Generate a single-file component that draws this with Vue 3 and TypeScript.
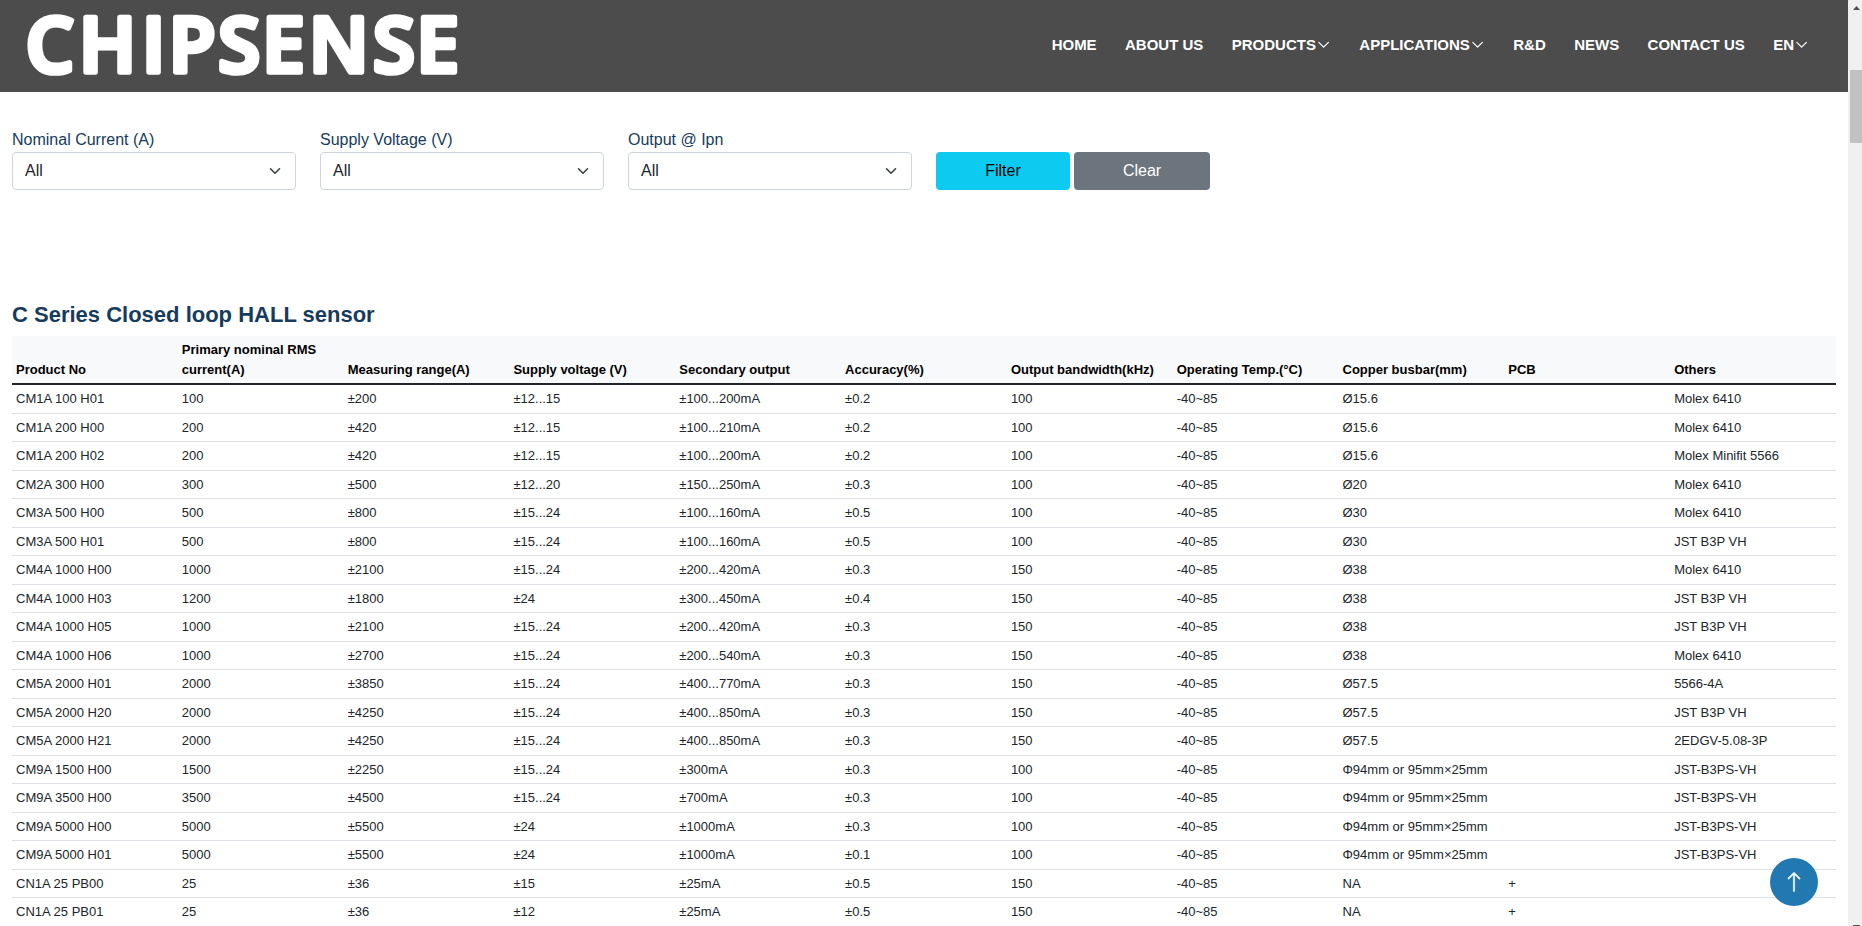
<script setup lang="ts">
interface NavItem { label: string; menu?: boolean }

const nav: NavItem[] = [
  { label: 'HOME' },
  { label: 'ABOUT US' },
  { label: 'PRODUCTS', menu: true },
  { label: 'APPLICATIONS', menu: true },
  { label: 'R&D' },
  { label: 'NEWS' },
  { label: 'CONTACT US' },
  { label: 'EN', menu: true },
]

const filters: string[] = ['Nominal Current (A)', 'Supply Voltage (V)', 'Output @ Ipn']

const columns: string[] = [
  'Product No', 'Primary nominal RMS current(A)', 'Measuring range(A)', 'Supply voltage (V)',
  'Secondary output', 'Accuracy(%)', 'Output bandwidth(kHz)', 'Operating Temp.(°C)',
  'Copper busbar(mm)', 'PCB', 'Others',
]

const T = '-40~85'
const BAR = 'Φ94mm or 95mm×25mm'
const rows: string[][] = [
  ['CM1A 100 H01', '100', '±200', '±12...15', '±100...200mA', '±0.2', '100', T, 'Ø15.6', '', 'Molex 6410'],
  ['CM1A 200 H00', '200', '±420', '±12...15', '±100...210mA', '±0.2', '100', T, 'Ø15.6', '', 'Molex 6410'],
  ['CM1A 200 H02', '200', '±420', '±12...15', '±100...200mA', '±0.2', '100', T, 'Ø15.6', '', 'Molex Minifit 5566'],
  ['CM2A 300 H00', '300', '±500', '±12...20', '±150...250mA', '±0.3', '100', T, 'Ø20', '', 'Molex 6410'],
  ['CM3A 500 H00', '500', '±800', '±15...24', '±100...160mA', '±0.5', '100', T, 'Ø30', '', 'Molex 6410'],
  ['CM3A 500 H01', '500', '±800', '±15...24', '±100...160mA', '±0.5', '100', T, 'Ø30', '', 'JST B3P VH'],
  ['CM4A 1000 H00', '1000', '±2100', '±15...24', '±200...420mA', '±0.3', '150', T, 'Ø38', '', 'Molex 6410'],
  ['CM4A 1000 H03', '1200', '±1800', '±24', '±300...450mA', '±0.4', '150', T, 'Ø38', '', 'JST B3P VH'],
  ['CM4A 1000 H05', '1000', '±2100', '±15...24', '±200...420mA', '±0.3', '150', T, 'Ø38', '', 'JST B3P VH'],
  ['CM4A 1000 H06', '1000', '±2700', '±15...24', '±200...540mA', '±0.3', '150', T, 'Ø38', '', 'Molex 6410'],
  ['CM5A 2000 H01', '2000', '±3850', '±15...24', '±400...770mA', '±0.3', '150', T, 'Ø57.5', '', '5566-4A'],
  ['CM5A 2000 H20', '2000', '±4250', '±15...24', '±400...850mA', '±0.3', '150', T, 'Ø57.5', '', 'JST B3P VH'],
  ['CM5A 2000 H21', '2000', '±4250', '±15...24', '±400...850mA', '±0.3', '150', T, 'Ø57.5', '', '2EDGV-5.08-3P'],
  ['CM9A 1500 H00', '1500', '±2250', '±15...24', '±300mA', '±0.3', '100', T, BAR, '', 'JST-B3PS-VH'],
  ['CM9A 3500 H00', '3500', '±4500', '±15...24', '±700mA', '±0.3', '100', T, BAR, '', 'JST-B3PS-VH'],
  ['CM9A 5000 H00', '5000', '±5500', '±24', '±1000mA', '±0.3', '100', T, BAR, '', 'JST-B3PS-VH'],
  ['CM9A 5000 H01', '5000', '±5500', '±24', '±1000mA', '±0.1', '100', T, BAR, '', 'JST-B3PS-VH'],
  ['CN1A 25 PB00', '25', '±36', '±15', '±25mA', '±0.5', '150', T, 'NA', '+', ''],
  ['CN1A 25 PB01', '25', '±36', '±12', '±25mA', '±0.5', '150', T, 'NA', '+', ''],
]
</script>

<template>
  <div class="window">
    <div class="page">
      <header class="header">
        <svg class="logo" width="480" height="92" viewBox="0 0 480 92">
          <text x="25.8 79 142 168.7 218.3 262.3 309 373 416.6" y="72.2">CHIPSENSE</text>
        </svg>
        <nav class="nav">
          <a v-for="item in nav" :key="item.label" class="nav-link">
            <span>{{ item.label }}</span>
            <svg v-if="item.menu" class="nav-caret" width="15" height="12" viewBox="0 0 15 12">
              <path d="M2.8 3.4 7.6 8.2l4.8-4.8" />
            </svg>
          </a>
        </nav>
      </header>

      <main class="main">
        <form class="filters">
          <div v-for="f in filters" :key="f" class="field">
            <label>{{ f }}</label>
            <div class="select">
              <span>All</span>
              <svg width="16" height="12" viewBox="0 0 16 16"><path d="m2 5 6 6 6-6" /></svg>
            </div>
          </div>
          <div class="actions">
            <button type="button" class="btn btn-filter">Filter</button>
            <button type="button" class="btn btn-clear">Clear</button>
          </div>
        </form>

        <h2 class="title">C Series Closed loop HALL sensor</h2>
        <table class="table">
          <thead>
            <tr><th v-for="c in columns" :key="c">{{ c }}</th></tr>
          </thead>
          <tbody>
            <tr v-for="r in rows" :key="r[0]">
              <td v-for="(v, i) in r" :key="i">{{ v }}</td>
            </tr>
          </tbody>
        </table>
      </main>
    </div>

    <aside class="scrollbar">
      <svg class="scroll-arrow" width="14" height="17" viewBox="0 0 14 17"><path d="M5 10 8.5 6 12 10z" /></svg>
      <div class="thumb"></div>
      <svg class="scroll-end" width="14" height="1" viewBox="0 0 14 1"><path d="M5 0h7v1H5z" /></svg>
    </aside>

    <a class="to-top" aria-label="Back to top">
      <svg width="22" height="22" viewBox="0 0 16 16">
        <path fill-rule="evenodd" d="M8 15a.5.5 0 0 0 .5-.5V2.707l3.146 3.147a.5.5 0 0 0 .708-.708l-4-4a.5.5 0 0 0-.708 0l-4 4a.5.5 0 1 0 .708.708L7.5 2.707V14.5a.5.5 0 0 0 .5.5z" />
      </svg>
    </a>
  </div>
</template>

<style>
body { margin: 0; overflow: hidden; }
</style>

<style scoped>
* { box-sizing: border-box; }
.window {
  position: relative;
  display: flex;
  width: 1862px;
  height: 926px;
  overflow: hidden;
  background: #fff;
  color: #212529;
  font: 16px/1.5 "Liberation Sans", Arial, sans-serif;
}
.page { flex: 1; min-width: 0; height: 926px; overflow: hidden; }
.header {
  display: flex;
  align-items: center;
  justify-content: space-between;
  height: 92px;
  padding-right: 39px;
  background: #4c4c4c;
}
.logo { display: block; overflow: visible; }
.logo text {
  font-family: "Open Sans", "Liberation Sans", sans-serif;
  font-weight: 600;
  font-size: 76px;
  fill: #fff;
  stroke: #fff;
  stroke-width: 5.6px;
  stroke-linejoin: round;
}
.nav { display: flex; gap: 28.4px; padding-bottom: 2px; }
.nav-link {
  display: flex;
  align-items: center;
  color: #fff;
  font-size: 15px;
  font-weight: 700;
  white-space: nowrap;
}
.nav-caret path { fill: none; stroke: #fff; stroke-width: 1.2; stroke-linecap: round; stroke-linejoin: round; }
.main { padding: 36px 12px 0; }
.filters { display: flex; align-items: flex-end; gap: 24px; }
.field { width: 284px; }
.field label { display: block; color: #173b5c; }
.select {
  display: flex;
  align-items: center;
  justify-content: space-between;
  height: 38px;
  padding: 0 12px;
  border: 1px solid #ced4da;
  border-radius: 4px;
}
.select path { fill: none; stroke: #343a40; stroke-width: 2; stroke-linecap: round; stroke-linejoin: round; }
.actions { display: flex; gap: 4px; }
.btn {
  height: 38px;
  padding: 0;
  border: 0;
  border-radius: 4px;
  font: inherit;
}
.btn-filter { width: 134px; background: #0dcaf0; color: #000; }
.btn-clear { width: 136px; background: #6c757d; color: #fff; }
.title {
  margin: 111px 0 8px;
  color: #173b5c;
  font-size: 22px;
  font-weight: 700;
  line-height: 27px;
}
.table {
  width: 100%;
  table-layout: fixed;
  border-collapse: collapse;
  font-size: 13px;
  line-height: 19.5px;
}
.table th {
  padding: 4px;
  background: #f8f9fb;
  color: #000;
  font-weight: 700;
  text-align: left;
  vertical-align: bottom;
}
.table td { padding: 4px; border-bottom: 1px solid #dee2e6; white-space: nowrap; }
.table thead { border-bottom: 2px solid #212529; }
.scrollbar {
  display: flex;
  flex-direction: column;
  width: 14px;
  height: 926px;
  background: #f0f0f0;
}
.scrollbar path { fill: #505050; }
.scroll-arrow { display: block; flex: none; }
.thumb { margin: 53px 0 0 2px; height: 73px; background: #c1c1c1; }
.scroll-end { display: block; margin-top: auto; flex: none; }
.to-top {
  position: absolute;
  left: 1770px;
  top: 858px;
  display: flex;
  align-items: center;
  justify-content: center;
  width: 48px;
  height: 48px;
  border-radius: 50%;
  background: #2278b0;
}
.to-top path { fill: #fff; stroke: #fff; stroke-width: 0.3; }
</style>
